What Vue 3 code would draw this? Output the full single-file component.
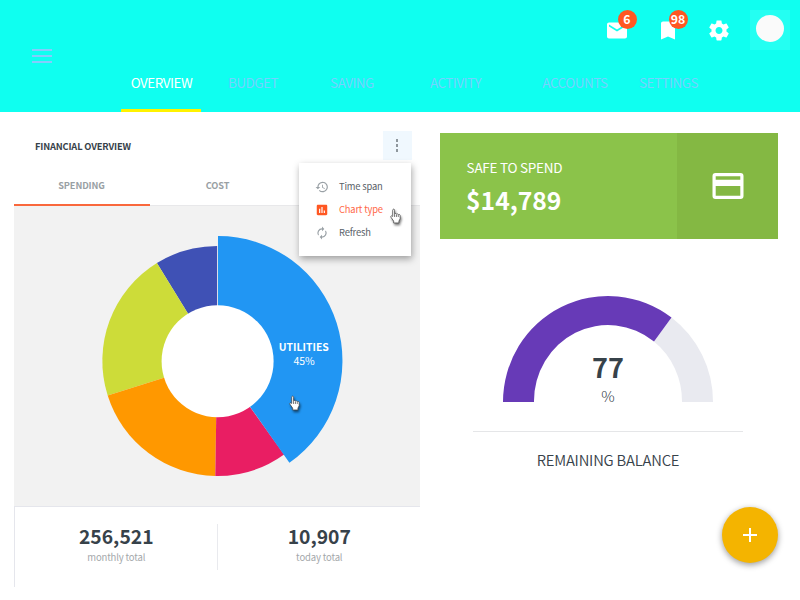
<script setup>
const tabs = [
  { label: 'OVERVIEW', width: 80 },
  { label: 'BUDGET', width: 103 },
  { label: 'SAVING', width: 95 },
  { label: 'ACTIVITY', width: 112 },
  { label: 'ACCOUNTS', width: 127 },
  { label: 'SETTINGS', width: 60 },
]
const slices = [
  { color: '#3f51b5', d: 'M203.5 155 L143.3 57 A115.3 115.3 0 0 1 203.5 40 Z' },
  { color: '#cddc39', d: 'M203.5 155 L94.1 189.5 A115 115 0 0 1 143.3 57 Z' },
  { color: '#ff9800', d: 'M203.5 155 L201.7 270 A115 115 0 0 1 94.1 189.5 Z' },
  { color: '#e91e63', d: 'M203.5 155 L270.5 248.5 A115 115 0 0 1 201.7 270 Z' },
  { color: '#2196f3', d: 'M204.4 155 L204.4 30 A124.3 124.6 0 0 1 275.8 256.7 Z' },
]
</script>

<template>
  <div class="page">
    <header class="header">
      <button class="burger" aria-label="Menu"><i></i><i></i><i></i></button>
      <div class="header-main">
        <div class="actions">
          <span class="action">
            <svg viewBox="0 0 24 24"><path d="M20 4H4c-1.1 0-2 .9-2 2v12c0 1.100.9 2 2 2h16c1.100 0 2-.9 2-2V6c0-1.100-.9-2-2-2zm0 4l-8 5-8-5V6l8 5 8-5v2z" /></svg>
            <b class="badge">6</b>
          </span>
          <span class="action">
            <svg viewBox="0 0 24 24"><path d="M17 3H7c-1.100 0-2 .9-2 2v16l7-3 7 3V5c0-1.100-.9-2-2-2z" /></svg>
            <b class="badge">98</b>
          </span>
          <span class="action">
            <svg viewBox="0 0 24 24"><path d="M19.430 12.980c.04-.32.070-.64.070-.98s-.03-.66-.07-.98l2.110-1.650c.19-.15.240-.42.120-.64l-2-3.460c-.12-.22-.39-.3-.61-.22l-2.490 1c-.52-.4-1.080-.73-1.690-.98l-.38-2.650C14.460 2.180 14.250 2 14 2h-4c-.25 0-.46.180-.49.420l-.38 2.650c-.61.250-1.170.590-1.690.980l-2.490-1c-.23-.09-.49 0-.61.220l-2 3.460c-.13.220-.07.490.120.640l2.110 1.650c-.04.320-.07.650-.07.980s.03.660.070.980l-2.110 1.650c-.19.150-.24.420-.12.640l2 3.460c.12.220.39.300.61.220l2.490-1c.52.400 1.080.730 1.690.980l.38 2.650c.03.240.24.420.49.420h4c.25 0 .46-.18.49-.42l.38-2.650c.61-.25 1.170-.59 1.690-.98l2.490 1c.23.090.49 0 .61-.22l2-3.460c.12-.22.070-.49-.12-.64l-2.110-1.650zM12 15.500c-1.930 0-3.500-1.570-3.500-3.500s1.570-3.500 3.500-3.500 3.500 1.570 3.500 3.500-1.570 3.500-3.500 3.500z" /></svg>
          </span>
          <span class="avatar"><i></i></span>
        </div>
        <nav class="nav">
          <a v-for="(t, i) in tabs" :key="t.label" :class="{ active: i === 0 }" :style="{ width: t.width + 'px' }">{{ t.label }}</a>
        </nav>
      </div>
    </header>

    <main class="content">
      <section class="finance">
        <div class="finance-head">
          <h2>FINANCIAL OVERVIEW</h2>
          <div class="more">
            <i></i><i></i><i></i>
            <ul class="menu">
              <li>
                <svg viewBox="0 0 24 24"><path d="M13 3a9 9 0 0 0-9 9H1l3.900 3.900.07.140L9 12H6a7 7 0 1 1 2.060 4.940l-1.420 1.420A9 9 0 1 0 13 3zm-1 5v5l4.280 2.540.72-1.210-3.500-2.080V8H12z" /></svg>
                <span>Time span</span>
              </li>
              <li class="selected">
                <svg viewBox="0 0 24 24"><path d="M19 3H5c-1.100 0-2 .9-2 2v14c0 1.100.9 2 2 2h14c1.100 0 2-.9 2-2V5c0-1.100-.9-2-2-2zM9 17H7v-7h2v7zm4 0h-2V7h2v10zm4 0h-2v-4h2v4z" /></svg>
                <span>Chart type</span>
              </li>
              <li>
                <svg viewBox="0 0 24 24"><path d="M12 6v3l4-4-4-4v3a8 8 0 0 0-6.760 12.260L6.700 14.800A6 6 0 0 1 12 6zm6.760 1.740L17.300 9.200A6 6 0 0 1 12 18v-3l-4 4 4 4v-3a8 8 0 0 0 6.760-12.260z" /></svg>
                <span>Refresh</span>
              </li>
            </ul>
            <svg class="cursor menu-cursor" viewBox="0 0 14 17"><path d="M4 8V2.200C4 .7 6 .7 6 2.200V6.200C6.500 5.500 7.700 5.600 8 6.500 8.700 5.900 9.700 6.200 10 7 11 6.500 12 7 12 8v3.500L10.700 14v2H5v-2L2 9.700C1.400 8.500 2.800 7.800 4 9z" /><path d="M6 6.500v3M8 7v2.500M10 7.500v2" /></svg>
          </div>
        </div>
        <div class="subtabs">
          <span class="current">SPENDING</span>
          <span>COST</span>
          <span></span>
        </div>
        <div class="chart">
          <svg class="donut" viewBox="0 0 406 300">
            <g transform="translate(-0.4 0)">
              <path v-for="s in slices" :key="s.color" :d="s.d" :fill="s.color" />
            </g>
            <circle cx="203.600" cy="155.200" r="56" fill="#fff" />
            <text class="slice-name" x="289.800" y="145">UTILITIES</text>
            <text class="slice-value" x="290" y="159">45%</text>
          </svg>
          <svg class="cursor chart-cursor" viewBox="0 0 14 17"><path d="M4 8V2.200C4 .7 6 .7 6 2.200V6.200C6.500 5.500 7.700 5.600 8 6.500 8.700 5.900 9.700 6.200 10 7 11 6.500 12 7 12 8v3.500L10.700 14v2H5v-2L2 9.700C1.400 8.500 2.800 7.800 4 9z" /><path d="M6 6.500v3M8 7v2.500M10 7.500v2" /></svg>
        </div>
        <div class="totals">
          <div class="total"><strong>256,521</strong><span>monthly total</span></div>
          <div class="total"><strong>10,907</strong><span>today total</span></div>
        </div>
      </section>

      <section class="side">
        <div class="safe">
          <div class="safe-text">
            <span>SAFE TO SPEND</span>
            <strong>$14,789</strong>
          </div>
          <div class="safe-icon">
            <svg viewBox="0 0 32 28"><path fill-rule="evenodd" d="M3.500 1h25A3 3 0 0 1 31.500 4v20a3 3 0 0 1-3 3h-25a3 3 0 0 1-3-3V4a3 3 0 0 1 3-3zM3.700 4.200v3.600h24.600V4.200zM3.700 14v9.800h24.600V14z" /></svg>
          </div>
        </div>
        <div class="gauge">
          <svg viewBox="0 0 210 106">
            <path fill="#e9eaf0" d="M168.500 21.500A105 106 0 0 1 210 106H179A74 76 0 0 0 151 45.500Z" />
            <path fill="#673ab7" d="M0 106A105 106 0 0 1 168.500 21.500L151 45.500A74 76 0 0 0 31 106Z" />
            <text class="gauge-value" x="105" y="82">77</text>
            <text class="gauge-unit" x="105" y="106">%</text>
          </svg>
        </div>
        <h3>REMAINING BALANCE</h3>
        <button class="fab" aria-label="Add"><svg viewBox="0 0 14 14"><path d="M6 0h2v6h6v2H8v6H6V8H0V6h6z" /></svg></button>
      </section>
    </main>
  </div>
</template>

<style>
body { margin: 0; background: #fff; }
</style>

<style scoped>
* { box-sizing: border-box; }
.page {
  width: 800px;
  height: 600px;
  overflow: hidden;
  background: #fff;
  color: #37424a;
  font-family: "Noto Sans CJK SC", "Noto Sans", sans-serif;
  white-space: nowrap;
}
button { border: 0; padding: 0; background: none; }
.header { display: flex; height: 112px; background: #0ffff0; }
.burger { display: flex; flex-direction: column; gap: 4px; width: 20px; margin: 49px 69px 0 32px; }
.burger i { width: 20px; height: 2px; background: #84ccfc; }
.header-main { flex: 1; display: flex; flex-direction: column; }
.actions { display: flex; justify-content: flex-end; padding: 10px 10px 0 0; height: 56px; }
.action { position: relative; width: 24px; height: 24px; margin: 8px 27px 0 0; }
.action:nth-child(3) { margin-right: 19px; }
.action svg { display: block; width: 24px; height: 25px; fill: #fff; }
.badge {
  position: absolute;
  left: 12.500px;
  top: -8px;
  width: 19px;
  height: 19px;
  border-radius: 50%;
  background: #ff5722;
  color: #fff;
  font-size: 12.300px;
  line-height: 18px;
  text-align: center;
}
.avatar { display: flex; justify-content: center; width: 40px; height: 40px; padding-top: 5px; background: #24fff2; }
.avatar i { width: 28px; height: 27px; border-radius: 50%; background: #fafafa; }
.nav { display: flex; height: 56px; }
.nav a {
  display: flex;
  justify-content: center;
  padding: 16px 0 0 1px;
  font-size: 13.400px;
  line-height: 20px;
  letter-spacing: -0.450px;
  color: #74d2ff;
  border-bottom: 3px solid transparent;
}
.nav a.active { color: #fff; border-color: #fff200; }
.content { display: flex; gap: 20px; padding-left: 14px; }
.finance { width: 406px; }
.finance-head { display: flex; justify-content: space-between; height: 54px; padding: 19px 8px 0 21px; }
h2 { margin: 5px 0 0; font-size: 9.300px; line-height: 20px; font-weight: 700; letter-spacing: -0.170px; }
.more {
  position: relative;
  display: flex;
  flex-direction: column;
  align-items: center;
  gap: 2px;
  width: 29px;
  height: 29px;
  padding: 8px 1px 0 0;
  background: #f0f8fe;
}
.more > i { width: 2px; height: 3px; background: #8f979d; }
.menu {
  position: absolute;
  z-index: 2;
  top: 32px;
  right: 1px;
  width: 112px;
  height: 93px;
  margin: 0;
  padding: 12px 0 0 16px;
  list-style: none;
  background: #fff;
  box-shadow: 1px 3px 7px rgba(0, 0, 0, .35);
}
.menu li { display: flex; align-items: center; gap: 10px; height: 23px; font-size: 9.400px; letter-spacing: -0.180px; color: #596168; }
.menu li span { margin-top: -1px; }
.menu li svg { width: 14px; height: 14px; fill: #9aa1a6; }
.menu .selected { color: #ff6848; }
.menu .selected svg { fill: #ff5722; }
.cursor {
  position: absolute;
  z-index: 3;
  width: 13px;
  height: 16px;
  fill: #fff;
  stroke: #444;
  stroke-width: .8;
  filter: drop-shadow(1px 2px 1px rgba(0, 0, 0, .5));
}
.menu-cursor { left: 6px; top: 77px; }
.subtabs { display: flex; height: 40px; }
.subtabs span {
  flex: 1;
  text-align: center;
  padding-top: 9px;
  font-size: 9.200px;
  line-height: 20px;
  font-weight: 700;
  letter-spacing: -0.100px;
  color: #999fa4;
  border-bottom: 1px solid #e8e8ea;
}
.subtabs .current { padding-right: 1px; border-bottom: 2px solid #f9683c; }
.chart { position: relative; height: 300px; background: #f2f2f2; }
.donut { display: block; width: 406px; height: 300px; }
.slice-name, .slice-value { text-anchor: middle; fill: #fff; }
.slice-name { font-size: 10.400px; font-weight: 700; }
.slice-value { font-size: 10.500px; letter-spacing: -0.150px; }
.chart-cursor { left: 274px; top: 189px; }
.totals { display: flex; height: 81px; padding-top: 17px; border: solid #e5e6ec; border-width: 1px 0 0 1px; }
.total { width: 203px; height: 46px; padding-left: 1px; display: flex; flex-direction: column; align-items: center; }
.total:first-child { border-right: 1px solid #e9eaee; }
.total strong { font-size: 19.300px; line-height: 26px; margin-top: -1px; }
.total span { font-size: 9.500px; line-height: 14px; margin-top: 1px; letter-spacing: -0.150px; color: #a4a8ab; }
.side { display: flex; flex-direction: column; width: 338px; padding-top: 21px; }
.safe { display: flex; height: 106px; background: #8bc34a; color: #fff; }
.safe-text { display: flex; flex-direction: column; width: 237px; padding: 23px 0 0 26px; }
.safe-text span { padding-left: .6px; font-size: 13.500px; line-height: 22px; letter-spacing: -0.260px; }
.safe-text strong { font-size: 24.700px; line-height: 42px; }
.safe-icon { flex: 1; display: grid; place-items: center; background: #84b843; }
.safe-icon svg { width: 32px; height: 28px; fill: #fff; }
.gauge { width: 270px; height: 193px; margin-left: 33px; padding: 57px 30px 0; border-bottom: 1px solid #e5e6e8; }
.gauge svg { display: block; width: 210px; height: 106px; overflow: visible; }
.gauge text { text-anchor: middle; fill: #37424a; }
.gauge-value { font-size: 27px; font-weight: 700; }
.gauge-unit { font-size: 15px; font-weight: 300; }
h3 { margin: 17px 0 0; padding-right: 2px; font-size: 14.800px; line-height: 22px; font-weight: 350; letter-spacing: -0.200px; text-align: center; }
.fab {
  display: grid;
  place-items: center;
  align-self: flex-end;
  width: 56px;
  height: 56px;
  margin-top: 36px;
  border-radius: 50%;
  background: #f4b400;
  box-shadow: 0 2px 6px rgba(0, 0, 0, .4);
}
.fab svg { width: 14px; height: 14px; fill: #fff; }
</style>
